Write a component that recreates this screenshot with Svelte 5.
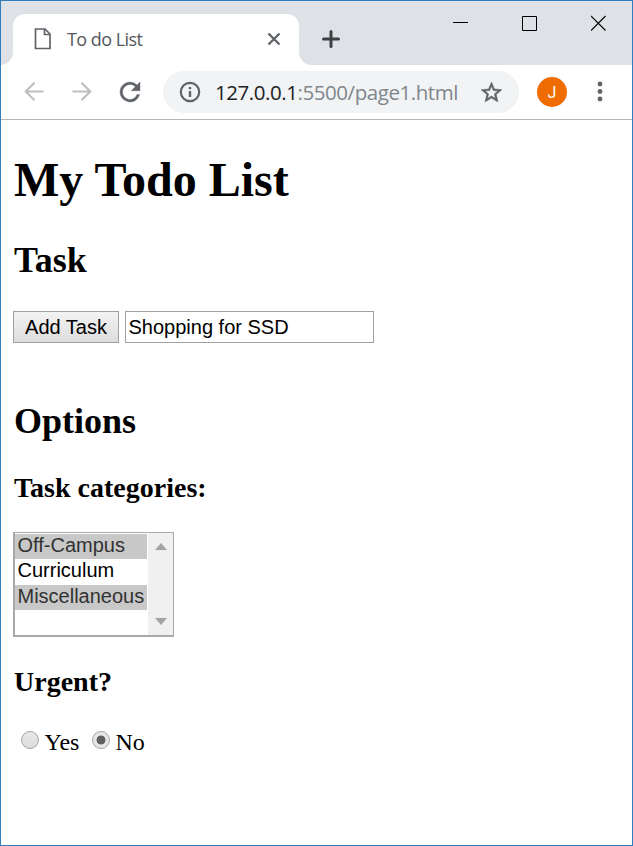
<script>
  const categories = [
    { name: 'Off-Campus', selected: true },
    { name: 'Curriculum', selected: false },
    { name: 'Miscellaneous', selected: true }
  ];
  const choices = ['Yes', 'No'];
  let urgent = $state('No');
  let task = $state('Shopping for SSD');
</script>

<div class="window">
  <header class="titlebar">
    <div class="tab">
      <svg class="doc" width="18" height="22" viewBox="0 0 18 22" fill="none" stroke="#5f6368" stroke-width="1.7">
        <path d="M1.500 1H11l5 5v14.500H1.500z" /><path d="M10.500 1v5.500H16" />
      </svg>
      <span class="tab-title">To do List</span>
      <svg class="tab-close" width="14" height="14" viewBox="0 0 14 14" stroke="#5f6368" stroke-width="2.3">
        <path d="M1.500 1.500l11 11M12.500 1.500l-11 11" />
      </svg>
      <i class="flare left"></i>
      <i class="flare right"></i>
    </div>
    <svg class="plus" width="18" height="18" viewBox="0 0 18 18" stroke="#3c4043" stroke-width="3" stroke-linecap="round">
      <path d="M9 1.500v15M1.500 9h15" />
    </svg>
    <div class="controls">
      <svg width="16" height="16" viewBox="0 0 16 16" stroke="#000"><path d="M0 7.500h15" /></svg>
      <svg width="16" height="16" viewBox="0 0 16 16" stroke="#000" fill="none"><path d="M.5 1.500h14v14H.5z" /></svg>
      <svg width="16" height="16" viewBox="0 0 16 16" stroke="#000" stroke-width="1.100"><path d="M0 1l14.500 14.500M14.500 1L0 15.500" /></svg>
    </div>
  </header>

  <nav class="toolbar">
    <svg class="back" width="20" height="20" viewBox="0 0 20 20" fill="none" stroke="#bcbec0" stroke-width="2.1"><path d="M19.500 9.500H2M10.500 .7L1.700 9.500l8.800 8.800" /></svg>
    <svg class="fwd" width="20" height="20" viewBox="0 0 20 20" fill="none" stroke="#bcbec0" stroke-width="2.100"><path d="M.5 9.500H18M9.500 .7l8.800 8.800-8.800 8.800" /></svg>
    <svg class="reload" width="30" height="30" viewBox="0 0 24 24" fill="#5f6368" stroke="#5f6368" stroke-width=".3"><path d="M17.650 6.350A7.958 7.958 0 0 0 12 4a8 8 0 1 0 7.730 10h-2.080A6 6 0 1 1 12 6c1.660 0 3.140.690 4.220 1.780L13 11h7V4z" /></svg>
    <div class="omnibox">
      <svg class="info" width="22" height="22" viewBox="0 0 22 22"><circle cx="11" cy="11" r="9.200" fill="none" stroke="#5f6368" stroke-width="2.200" /><path d="M9.800 10h2.400v6H9.800zM9.800 6h2.400v2.300H9.800z" fill="#5f6368" /></svg>
      <span class="url"><b>127.0.0.1</b><span>:5500/page1.html</span></span>
      <svg class="star" width="25" height="25" viewBox="0 0 24 24" fill="#5f6368" stroke="#5f6368" stroke-width=".5"><path d="M22 9.240l-7.190-.620L12 2 9.190 8.630 2 9.240l5.460 4.730L5.820 21 12 17.270 18.180 21l-1.630-7.030zM12 15.400l-3.760 2.270 1-4.280-3.320-2.880 4.380-.380L12 6.100l1.710 4.040 4.380.380-3.320 2.880 1 4.280z" /></svg>
    </div>
    <div class="avatar">J</div>
    <svg class="more" width="6" height="22" viewBox="0 0 6 22" fill="#5f6368"><circle cx="3" cy="3" r="2.400" /><circle cx="3" cy="10.500" r="2.400" /><circle cx="3" cy="18" r="2.400" /></svg>
  </nav>

  <main>
    <h1>My Todo List</h1>
    <h2>Task</h2>
    <div class="row">
      <button>Add Task</button>
      <input type="text" bind:value={task} />
    </div>
    <h2 class="options">Options</h2>
    <h3>Task categories:</h3>
    <div class="listbox">
      <ul>
        {#each categories as c}
          <li class:selected={c.selected}>{c.name}</li>
        {/each}
      </ul>
      <div class="scroll">
        <svg width="12" height="7" viewBox="0 0 12 7" fill="#a3a3a3"><path d="M6 0l6 7H0z" /></svg>
        <svg width="12" height="7" viewBox="0 0 12 7" fill="#a3a3a3"><path d="M6 7l6-7H0z" /></svg>
      </div>
    </div>
    <h3 class="urgent">Urgent?</h3>
    <div class="radios">
      {#each choices as c}
        <label><input type="radio" name="urgent" value={c} bind:group={urgent} />{c}</label>
      {/each}
    </div>
  </main>
</div>

<style>
  .window {
    box-sizing: border-box;
    width: 633px;
    height: 846px;
    border: 1px solid #2f7fc0;
    background: #fff;
    overflow: hidden;
    font-family: "Liberation Serif", "Times New Roman", serif;
    color: #000;
  }
  svg { display: block; flex: none; }
  .titlebar {
    display: flex;
    height: 64px;
    background: #dee1e6;
  }
  .tab {
    position: relative;
    box-sizing: border-box;
    display: flex;
    align-items: center;
    width: 286px;
    height: 51px;
    margin: 13px 0 0 12px;
    padding: 0 18px 2px 21px;
    border-radius: 12px 12px 0 0;
    background: #fff;
  }
  .tab-title {
    margin-left: 15px;
    flex: 1;
    font: 400 18px/24px "Open Sans", "Noto Sans", sans-serif;
    letter-spacing: -0.55px;
    color: #54575b;
    white-space: nowrap;
  }
  .flare { position: absolute; bottom: 0; width: 12px; height: 12px; }
  .left { left: -12px; background: radial-gradient(circle at 0 0, transparent 11.500px, #fff 12px); }
  .right { right: -12px; background: radial-gradient(circle at 100% 0, transparent 11.500px, #fff 12px); }
  .plus { margin: 29px 0 0 23px; }
  .controls { display: flex; gap: 53px; margin: 14px 0 0 auto; padding-right: 25px; }
  .toolbar {
    box-sizing: border-box;
    display: flex;
    align-items: center;
    height: 55px;
    border-bottom: 1px solid #b3b5b7;
    padding-left: 23px;
  }
  .fwd { margin-left: 28px; }
  .reload { margin-left: 23px; }
  .omnibox {
    box-sizing: border-box;
    display: flex;
    align-items: center;
    width: 356px;
    height: 42px;
    margin-left: 18px;
    padding: 0 15px 0 16px;
    border-radius: 21px;
    background: #f1f3f4;
  }
  .url {
    flex: 1;
    margin-left: 14px;
    font: 400 20.500px/28px "Open Sans", "Noto Sans", sans-serif;
    letter-spacing: -0.44px;
    color: #80868b;
    white-space: nowrap;
  }
  .url b { font-weight: 400; color: #202124; }
  .avatar {
    width: 30px;
    height: 30px;
    margin-left: 18px;
    border-radius: 50%;
    background: #ef6c00;
    color: #fff;
    font: 400 16px/31px Roboto, sans-serif;
    text-align: center;
  }
  .more { margin-left: 29.500px; }
  main { padding: 32px 12px 0; }
  h1, h2, h3 { margin: 0; padding-left: 1px; font-weight: bold; white-space: nowrap; }
  h1 { font-size: 48px; line-height: 56px; }
  h2 { margin-top: 31px; font-size: 36px; line-height: 42px; }
  h3 { margin-top: 30px; font-size: 28px; line-height: 32px; }
  .row { display: flex; gap: 6px; margin-top: 30px; }
  button, .row input {
    box-sizing: border-box;
    height: 32px;
    border: 1px solid #a0a0a0;
    border-radius: 0;
    font: 20px "Liberation Sans", Arial, sans-serif;
    color: #000;
  }
  button { width: 106px; padding: 0; background: linear-gradient(#f3f3f3, #ddd); white-space: nowrap; }
  .row input { width: 249px; padding: 0 2.500px; background: #fff; outline: 0; }
  .options { margin-top: 57px; }
  .listbox {
    box-sizing: border-box;
    display: flex;
    justify-content: space-between;
    width: 161px;
    height: 105px;
    margin-top: 28px;
    border: solid #a9a9a9;
    border-width: 1px 1px 2px 2px;
  }
  ul { list-style: none; margin: 0.500px 0 0; padding: 0; width: 132px; }
  li {
    height: 25.500px;
    padding-left: 2.500px;
    font: 20px/23px "Liberation Sans", Arial, sans-serif;
    white-space: nowrap;
  }
  .selected { background: #c8c8c8; color: #323232; }
  .scroll {
    box-sizing: border-box;
    display: flex;
    flex-direction: column;
    justify-content: space-between;
    align-items: center;
    width: 25px;
    padding: 10px 0;
    background: #f0f0f0;
  }
  .urgent { margin-top: 29px; }
  .radios { display: flex; gap: 12.500px; margin: 30px 0 0 8px; font-size: 24px; line-height: 28px; }
  label { display: flex; }
  .radios input {
    appearance: none;
    box-sizing: border-box;
    width: 18px;
    height: 18px;
    margin: 3px 5.500px 0 0;
    border: 1px solid #a6a6a6;
    border-radius: 50%;
    background: linear-gradient(#e8e8e8, #dcdcdc);
  }
  .radios input:checked {
    background: radial-gradient(circle at 50% 50%, #606060 4.200px, #e6e6e6 4.800px);
  }
</style>
